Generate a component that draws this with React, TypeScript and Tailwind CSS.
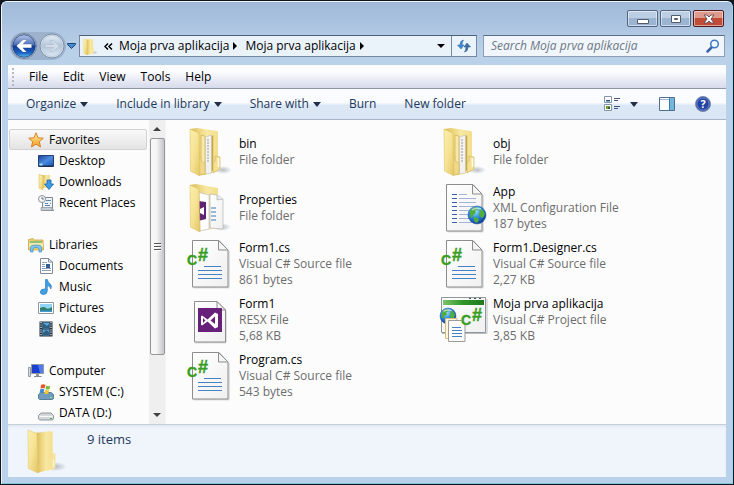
import type { ReactNode } from 'react';
import clsx from 'clsx';

type IconProps = { className?: string };

interface FileEntry {
  name: string;
  kind: string;
  size?: string;
  icon: ReactNode;
}

interface TreeGroup {
  label: string;
  icon: ReactNode;
  selected?: boolean;
  items: { label: string; icon: ReactNode }[];
}

// Gradients shared by all the icons
const Gradients = () => (
  <svg width="0" height="0" className="absolute" aria-hidden="true">
    <defs>
      <linearGradient id="flap" x1="0" y1="0" x2="1" y2="1">
        <stop offset="0" stopColor="#fbf0b0" />
        <stop offset="0.5" stopColor="#f6e292" />
        <stop offset="1" stopColor="#e3c564" />
      </linearGradient>
      <linearGradient id="panel" x1="0" y1="0" x2="1" y2="0">
        <stop offset="0" stopColor="#d6b858" />
        <stop offset="0.3" stopColor="#ecd47c" />
        <stop offset="0.6" stopColor="#f8e8a2" />
        <stop offset="1" stopColor="#f3de8c" />
      </linearGradient>
      <linearGradient id="paper" x1="0" y1="0" x2="1" y2="1">
        <stop offset="0" stopColor="#ffffff" />
        <stop offset="1" stopColor="#f0f0f0" />
      </linearGradient>
      <radialGradient id="shade">
        <stop offset="0" stopColor="#9aa3ad" stopOpacity="0.7" />
        <stop offset="1" stopColor="#9aa3ad" stopOpacity="0" />
      </radialGradient>
      <linearGradient id="back" x1="0" y1="0" x2="0" y2="1">
        <stop offset="0" stopColor="#b9c9e6" />
        <stop offset="0.45" stopColor="#4a6cb4" />
        <stop offset="0.5" stopColor="#123a90" />
        <stop offset="0.8" stopColor="#1b5fc0" />
        <stop offset="1" stopColor="#58c4f2" />
      </linearGradient>
      <linearGradient id="forward" x1="0" y1="0" x2="0" y2="1">
        <stop offset="0" stopColor="#e4ecf4" />
        <stop offset="0.5" stopColor="#b3c5d9" />
        <stop offset="1" stopColor="#dbe8f4" />
      </linearGradient>
      <radialGradient id="globe" cx="0.4" cy="0.3" r="0.75">
        <stop offset="0" stopColor="#a8e4ff" />
        <stop offset="0.45" stopColor="#2f8fe0" />
        <stop offset="1" stopColor="#0b2f8c" />
      </radialGradient>
      <linearGradient id="screen" x1="0" y1="0" x2="1" y2="1">
        <stop offset="0" stopColor="#1b3f9a" />
        <stop offset="0.5" stopColor="#4c8ce0" />
        <stop offset="1" stopColor="#1c50b0" />
      </linearGradient>
      <linearGradient id="star" x1="0" y1="0" x2="0" y2="1">
        <stop offset="0" stopColor="#fff3a0" />
        <stop offset="1" stopColor="#f59a1c" />
      </linearGradient>
      <linearGradient id="banner" x1="0" y1="0" x2="1" y2="0">
        <stop offset="0" stopColor="#7cc46a" />
        <stop offset="0.5" stopColor="#2f9428" />
        <stop offset="1" stopColor="#1f7a20" />
      </linearGradient>
    </defs>
  </svg>
);

const FolderIcon = ({ className = 'h-12 w-12' }: IconProps) => (
  <svg viewBox="0 0 48 48" className={className} aria-hidden="true">
    <ellipse cx="31" cy="41" rx="12" ry="5" fill="url(#shade)" />
    <path d="M10 4 26 2.500l2 1.500v40l-13 3-4 1Z" fill="url(#panel)" />
    <path d="M25 31l3-1.500V26l3 1v15l-4 3-2-1Z" fill="#f6e49a" />
    <path d="M29 34v7" stroke="#fffbe6" />
    <path d="M1 1 11 5 12 48 1.500 43Z" fill="url(#flap)" stroke="#e0c468" strokeWidth="0.500" />
  </svg>
);

const FilledFolderIcon = () => (
  <svg viewBox="0 0 48 48" className="h-12 w-12" aria-hidden="true">
    <ellipse cx="35" cy="42" rx="9" ry="4" fill="url(#shade)" />
    <path d="M2 1 9 0l20 3 1 1v39l-13 4h-6Z" fill="url(#panel)" />
    <path d="M13 7l4 1v38l-4 1Z" fill="#f7e8a6" stroke="#c7a748" strokeWidth="0.600" />
    <path d="M17.500 9 23.500 7v38l-6 1Z" fill="#f1f1ef" stroke="#c4bfae" strokeWidth="0.600" />
    <path d="M20 11v24" stroke="#bcbcbc" strokeWidth="1.500" strokeDasharray="2 1" />
    <path d="M24.500 7.500v35" stroke="#c7a54a" strokeWidth="1.500" />
    <path d="M10 32l1-3h2v4l4 2v11l-6 1Z" fill="#efd888" stroke="#d0b050" strokeWidth="0.500" />
    <path d="M25 35l2-2v-5l5 1v12l-7 4Z" fill="#f4e092" stroke="#cfb050" strokeWidth="0.600" />
    <path d="M30.500 30v9" stroke="#fffdf0" strokeWidth="1.500" />
    <path d="M2 1 11 5 12 48 2.500 43Z" fill="url(#flap)" stroke="#d8b956" strokeWidth="0.500" />
  </svg>
);

const PropertiesFolderIcon = () => (
  <svg viewBox="0 0 48 48" className="h-12 w-12" aria-hidden="true">
    <ellipse cx="34" cy="43" rx="9" ry="4" fill="url(#shade)" />
    <path d="M2 1 8 0l22 4v40l-18 3Z" fill="url(#panel)" />
    <path d="M11 8.500l10 2.500v34l-9 2Z" fill="#ffffff" stroke="#b8b8b8" strokeWidth="0.600" />
    <path d="M10 17l8 1v17l-8 2Z" fill="#5d2274" />
    <path d="M12 25l4-2v8l-4-2Z" fill="#ffffff" />
    <path d="M22 10l7 1 6 4v30l-13-1Z" fill="url(#paper)" stroke="#b4b4b4" strokeWidth="0.700" />
    <path d="M29 11v5l6-1" fill="#e9e9e9" stroke="#a8a8a8" strokeWidth="0.600" />
    <path d="M23 24h5M23 28h5M23 32h5M23 36h5" stroke="#3c78b8" strokeWidth="1.200" />
    <path d="M2 1 11 5 12 48 2.500 43Z" fill="url(#flap)" stroke="#d8b956" strokeWidth="0.500" />
  </svg>
);

const Page = () => (
  <>
    <path d="M5.500 47.800H41V11" fill="none" stroke="#c6c6c6" />
    <path d="M4.500.5H31L40 10v37H4.500Z" fill="url(#paper)" stroke="#8d8d8d" />
    <path d="M30.500.5V10H40Z" fill="#f4f4f4" stroke="#8d8d8d" strokeLinejoin="round" />
  </>
);

const SharpMark = ({ x, y }: { x: number; y: number }) => (
  <g fill="#3a9d23" stroke="#3a9d23" strokeWidth="0.400" fontFamily="Liberation Sans, Arial, sans-serif" fontWeight="bold">
    <text x={x - 1} y={y} fontSize="14">C</text>
    <text x={x + 10} y={y - 4} fontSize="18">#</text>
  </g>
);

const CSharpFileIcon = () => (
  <svg viewBox="0 0 48 48" className="h-12 w-12 overflow-visible" aria-hidden="true">
    <Page />
    <path d="M16 26.500h17M10 30.500h24M10 34.500h24M10 38.500h24" stroke="#4682c4" />
    <SharpMark x={0} y={25} />
  </svg>
);

const Globe = ({ cx, cy, r }: { cx: number; cy: number; r: number }) => (
  <g transform={`translate(${cx} ${cy}) scale(${r / 9})`}>
    <circle r="9" fill="url(#globe)" stroke="#1c4c9c" strokeWidth="0.500" />
    <path d="M-7-4c2-3 5-4 7-4l1 2-3 2 1 2-3 2-1 3-2-1ZM2-6l4 1 2 4-2 4-3-1-1-3 1-2ZM-3 2l4 1 1 2-2 3-3-2Z" fill="#4fae3c" />
    <path d="M-5-5q4-3 9-1" fill="none" stroke="#ffffff" strokeOpacity="0.600" strokeWidth="1.500" />
  </g>
);

const ConfigFileIcon = () => (
  <svg viewBox="0 0 48 48" className="h-12 w-12 overflow-visible" aria-hidden="true">
    <Page />
    <path d="M10 10.500h5M10 14.500h5M10 18.500h5M10 22.500h5M10 26.500h5M10 30.500h5M10 34.500h5M10 38.500h5" stroke="#3e5ca8" />
    <path d="M17 10.500h8M17 14.500h17M17 18.500h17M17 22.500h17M17 26.500h12M17 30.500h10M17 34.500h11M17 38.500h14" stroke="#a3b2d8" />
    <Globe cx={35} cy={31} r={9} />
  </svg>
);

const ResxFileIcon = () => (
  <svg viewBox="0 0 48 48" className="h-12 w-12" aria-hidden="true">
    <path d="M7 46.800h31V15" fill="none" stroke="#c6c6c6" />
    <path d="M6.500 5.500H29L37.500 14v32h-31Z" fill="url(#paper)" stroke="#8d8d8d" />
    <path d="M29 5.500V14h8.500Z" fill="#f4f4f4" stroke="#8d8d8d" strokeLinejoin="round" />
    <path d="M10 12h24v24H10Z" fill="#68217a" />
    <path
      d="M14 19.500 19.500 23.500 27 16.500 30 18v13l-3 1.500-7.500-7L14 29.500l-1-.7v-8.500ZM15 22v5l2.500-2.500ZM27 20.500l-4.500 4L27 28Z"
      fill="#ffffff"
      fillRule="evenodd"
    />
  </svg>
);

const ProjectIcon = () => (
  <svg viewBox="0 0 48 48" className="h-12 w-12 overflow-visible" aria-hidden="true">
    <path d="M-.5 1.500h44v35h-44Z" fill="url(#paper)" stroke="#8f969c" />
    <path d="M0 37.500h45V3" fill="none" stroke="#b9bdc0" />
    <path d="M1 4h41v5H1Z" fill="url(#banner)" />
    <path d="M27 2.500h2M32 2.500h2M37 2.500h2" stroke="#3b5f38" />
    <Globe cx={6} cy={20} r={8} />
    <path d="M3.500 22.500H15v20H3.500Z" fill="#fff6dc" stroke="#d6bd84" />
    <path d="M6.500 24.500H19l4 4v17H6.500Z" fill="#fbfbfb" stroke="#9b9b9b" />
    <path d="M10 31.500h9M10 34.500h10M10 37.500h10M10 40.500h10" stroke="#4682c4" />
    <SharpMark x={20} y={29} />
  </svg>
);

const StarIcon = () => (
  <svg viewBox="0 0 16 16" className="h-4 w-4" aria-hidden="true">
    <path d="M8 .8 10 5.800l5.300.4-4 3.500 1.300 5.300L8 12.200 3.400 15l1.300-5.300-4-3.500L6 5.800Z" fill="url(#star)" stroke="#d9822b" />
  </svg>
);

const DesktopIcon = () => (
  <svg viewBox="0 0 16 16" className="h-4 w-4" aria-hidden="true">
    <path d="M.5 2.500h15v11H.5Z" fill="url(#screen)" stroke="#27406e" />
    <path d="M1 13h14" stroke="#16233d" />
    <path d="M1.500 11.500h3" stroke="#9fe0ff" strokeWidth="2" />
  </svg>
);

const DownloadsIcon = () => (
  <svg viewBox="0 0 16 16" className="h-4 w-4" aria-hidden="true">
    <path d="M4 1h8v13H4Z" fill="url(#panel)" />
    <path d="M1 0l4 2v14l-4-2Z" fill="url(#flap)" stroke="#d8b956" strokeWidth="0.500" />
    <path d="M9 6h4v4h2.500L11 15.500 6.500 10H9Z" fill="#3b9be6" stroke="#1c62b0" strokeWidth="0.800" />
  </svg>
);

const RecentIcon = () => (
  <svg viewBox="0 0 16 16" className="h-4 w-4" aria-hidden="true">
    <path d="M5.500 2.500h9v11l1 2h-11v-11Z" fill="#eef2f6" stroke="#7e8994" />
    <path d="M3 12.500h11v3H3Z" fill="#c4ccd4" stroke="#7e8994" strokeWidth="0.600" />
    <path d="M8 5.500h5M7 8.500h3M12 8.500h1M7 10.500h5" stroke="#5b87b5" />
    <circle cx="4" cy="4" r="3.500" fill="#f7f7f7" stroke="#8b939b" />
    <path d="M4 2v2h2" fill="none" stroke="#4b5560" strokeWidth="0.800" />
  </svg>
);

const LibrariesIcon = () => (
  <svg viewBox="0 0 16 16" className="h-4 w-4" aria-hidden="true">
    <path d="M.5 2.500 5 1.500l1 1.500h9l.5 10h-15Z" fill="#edcf72" stroke="#c9a545" strokeWidth="0.800" />
    <path d="M2 4h12v2H2Z" fill="#8fc17a" />
    <path d="M1 6h14v4H1Z" fill="#f9eaa8" />
    <path d="M2.500 15v-4.500q0-2.500 5.500-2.500t5.500 2.500V15H11v-3q0-1.500-3-1.500T5 12v3Z" fill="#7fc4ee" stroke="#3f8fc4" strokeWidth="0.700" />
  </svg>
);

const DocumentsIcon = () => (
  <svg viewBox="0 0 16 16" className="h-4 w-4" aria-hidden="true">
    <path d="M2.500.5h8L14.500 4v11.500h-12Z" fill="#ffffff" stroke="#7d8a99" />
    <path d="M10.500.5V4h4" fill="none" stroke="#7d8a99" />
    <path d="M4 4.500h5M4 6.500h3M4 8.500h3M4 10.500h9M4 12.500h9" stroke="#8ba0b8" />
    <path d="M8 6h4v4H8Z" fill="#2f5f94" />
  </svg>
);

const MusicIcon = () => (
  <svg viewBox="0 0 16 16" className="h-4 w-4" aria-hidden="true">
    <path
      d="M7.500.5h1.800q.5 3 3 4.500 2 2 .5 5-.2-3-3.500-3.500V12q-.3 3.500-4 3.500-3-.2-3-2.500.3-3 3.700-3 1 0 1.500.3Z"
      fill="#3fa0e6"
      stroke="#1e70ba"
      strokeWidth="0.600"
    />
  </svg>
);

const PicturesIcon = () => (
  <svg viewBox="0 0 16 16" className="h-4 w-4" aria-hidden="true">
    <path d="M.5 2.500h15v11H.5Z" fill="#ffffff" stroke="#8b98a6" />
    <path d="M2 4h12v8H2Z" fill="#8fd3f5" />
    <path d="M2 8q4-2 6 0t6-1v5H2Z" fill="#2f7d6c" />
    <path d="M2 10.500h12V12H2Z" fill="#3f9bd0" />
  </svg>
);

const VideosIcon = () => (
  <svg viewBox="0 0 16 16" className="h-4 w-4" aria-hidden="true">
    <path d="M1.500.5h13v15h-13Z" fill="#24303c" />
    <path d="M4.500 1.500h7v6h-7ZM4.500 8.500h7v6h-7Z" fill="#5aa5dc" />
    <path d="M5 2l4 3 2-2v4H5ZM5 12l3-3 3 2v3H5Z" fill="#2f5f7e" />
    <path d="M3 1v14M13 1v14" stroke="#e9eef3" strokeWidth="1.200" strokeDasharray="1.200 1.200" />
  </svg>
);

const ComputerIcon = () => (
  <svg viewBox="0 0 16 16" className="h-4 w-4" aria-hidden="true">
    <path d="M.5 4.500h2v9h-2Z" fill="#d5dbe0" stroke="#7f8b95" strokeWidth="0.800" />
    <path d="M3.500 1.500h12v9h-12Z" fill="#1c3fd0" stroke="#8f9aa5" />
    <path d="M10 2h5v8h-3Z" fill="#4e7cf0" />
    <path d="M8 11h3v2H8Z" fill="#8f9aa5" />
    <path d="M6 13.500h7.500" stroke="#7f8b95" />
  </svg>
);

const SystemDriveIcon = () => (
  <svg viewBox="0 0 16 16" className="h-4 w-4" aria-hidden="true">
    <path d="M.5 10.500 3 8.500h10l2.500 2v4l-1 1h-13l-1-1Z" fill="#6f9cbc" stroke="#456b88" strokeWidth="0.800" />
    <path d="M12 13.500h2" stroke="#8af08a" />
    <path d="M3 1q2-1.500 4.500 0L6.500 4.500q-2-1-4 0Z" fill="#e8562a" />
    <path d="M8.300 1.500q2 1.200 4 .2L11.500 5q-2 1-4 0Z" fill="#7cba3c" />
    <path d="M2.300 5.300q2-1 4 0L5.500 9q-2-1-4 0Z" fill="#3d8ad6" />
    <path d="M7.200 5.800q2 1 4 .2l-1 3.500q-2 .8-4 0Z" fill="#f8c52c" />
  </svg>
);

const DataDriveIcon = () => (
  <svg viewBox="0 0 16 16" className="h-4 w-4" aria-hidden="true">
    <path d="M.5 10.500 3 8h10l2.500 2.500v3l-1 1.500h-13l-1-1.500Z" fill="#d4d8db" stroke="#7c8388" strokeWidth="0.800" />
    <path d="M1.500 11.500h13" stroke="#f8fafa" />
    <path d="M12 13.500h2" stroke="#3bb54a" />
  </svg>
);

const DownArrow = ({ className = 'h-[5px] fill-[#1f2f49]' }: IconProps) => (
  <svg viewBox="0 0 8 5" preserveAspectRatio="none" className={clsx('w-2', className)} aria-hidden="true">
    <path d="M0 0h8L4 5Z" />
  </svg>
);

const RightArrow = () => (
  <svg viewBox="0 0 4 8" className="h-2 w-1 shrink-0" aria-hidden="true">
    <path d="M0 0v8l4-4Z" />
  </svg>
);

const menus = ['File', 'Edit', 'View', 'Tools', 'Help'];

const tree: TreeGroup[] = [
  {
    label: 'Favorites',
    icon: <StarIcon />,
    selected: true,
    items: [
      { label: 'Desktop', icon: <DesktopIcon /> },
      { label: 'Downloads', icon: <DownloadsIcon /> },
      { label: 'Recent Places', icon: <RecentIcon /> },
    ],
  },
  {
    label: 'Libraries',
    icon: <LibrariesIcon />,
    items: [
      { label: 'Documents', icon: <DocumentsIcon /> },
      { label: 'Music', icon: <MusicIcon /> },
      { label: 'Pictures', icon: <PicturesIcon /> },
      { label: 'Videos', icon: <VideosIcon /> },
    ],
  },
  {
    label: 'Computer',
    icon: <ComputerIcon />,
    items: [
      { label: 'SYSTEM (C:)', icon: <SystemDriveIcon /> },
      { label: 'DATA (D:)', icon: <DataDriveIcon /> },
    ],
  },
];

const files: FileEntry[] = [
  { name: 'bin', kind: 'File folder', icon: <FilledFolderIcon /> },
  { name: 'obj', kind: 'File folder', icon: <FilledFolderIcon /> },
  { name: 'Properties', kind: 'File folder', icon: <PropertiesFolderIcon /> },
  { name: 'App', kind: 'XML Configuration File', size: '187 bytes', icon: <ConfigFileIcon /> },
  { name: 'Form1.cs', kind: 'Visual C# Source file', size: '861 bytes', icon: <CSharpFileIcon /> },
  { name: 'Form1.Designer.cs', kind: 'Visual C# Source file', size: '2,27 KB', icon: <CSharpFileIcon /> },
  { name: 'Form1', kind: 'RESX File', size: '5,68 KB', icon: <ResxFileIcon /> },
  { name: 'Moja prva aplikacija', kind: 'Visual C# Project file', size: '3,85 KB', icon: <ProjectIcon /> },
  { name: 'Program.cs', kind: 'Visual C# Source file', size: '543 bytes', icon: <CSharpFileIcon /> },
];

const captionButton =
  'flex h-[17px] w-[31px] items-center justify-center rounded-[2px] border shadow-[inset_0_0_0_1px_rgba(255,255,255,0.5)]';

const TitleBar = () => (
  <div className="flex justify-end gap-[2px] pr-[2px]">
    <button aria-label="Minimize" className={clsx(captionButton, 'border-[#54667f] bg-linear-to-b from-[#bccee4] from-50% to-[#9bb4d2] to-50%')}>
      <svg viewBox="0 0 12 6" className="mt-1 h-[6px] w-3" aria-hidden="true">
        <path d="M.5 1.500h11v4H.5Z" fill="#ffffff" stroke="#535a68" />
      </svg>
    </button>
    <button aria-label="Maximize" className={clsx(captionButton, 'border-[#54667f] bg-linear-to-b from-[#bccee4] from-50% to-[#9bb4d2] to-50%')}>
      <svg viewBox="0 0 12 10" className="h-[10px] w-3" aria-hidden="true">
        <path d="M1.500 1.500h9v7h-9Z" fill="#ffffff" stroke="#535a68" />
        <path d="M4.500 4.500h3v1h-3Z" fill="#8fa6c2" stroke="#535a68" />
      </svg>
    </button>
    <button aria-label="Close" className={clsx(captionButton, 'border-[#4f1a1c] bg-linear-to-b from-[#dd9a8d] from-50% to-[#c04c38] to-50%')}>
      <svg viewBox="0 0 12 10" className="h-[10px] w-3" aria-hidden="true">
        <path d="M1 1h3l2 2 2-2h3L8 5l3 4H8L6 7 4 9H1l3-4Z" fill="#ffffff" stroke="#5a4a58" strokeWidth="0.900" />
      </svg>
    </button>
  </div>
);

const NavButtons = () => (
  <div className="flex w-[69px] items-center">
    <div className="-my-1 flex items-center rounded-full bg-[#9db3cd]">
      <button aria-label="Back">
        <svg viewBox="0 0 28 28" className="h-7 w-7" aria-hidden="true">
          <circle cx="14" cy="14" r="12.500" fill="#dfe9f4" stroke="#6b7f9b" />
          <circle cx="14" cy="14" r="11.300" fill="url(#back)" stroke="#1d3b7a" strokeWidth="0.800" />
          <path d="M6.500 14 13 8h3.500l-4 4.300h9v3.400h-9l4 4.300H13Z" fill="#ffffff" />
        </svg>
      </button>
      <button aria-label="Forward">
        <svg viewBox="0 0 28 28" className="h-7 w-7" aria-hidden="true">
          <circle cx="14" cy="14" r="12" fill="#d9e4ef" stroke="#7c8fa8" />
          <circle cx="14" cy="14" r="10.500" fill="url(#forward)" stroke="#b5c4d5" strokeWidth="0.800" />
          <path d="M21.500 14 15 8.500h-3l3.800 4H7v3h8.800l-3.800 4h3Z" fill="#d3dee9" stroke="#a5b7cb" strokeWidth="0.500" />
        </svg>
      </button>
    </div>
    <button aria-label="Recent pages" className="ml-px">
      <svg viewBox="0 0 9 6" className="h-[6px] w-[9px]" aria-hidden="true">
        <path d="M.5.5h8v1l-4 4-4-4Z" fill="#3f8fd0" stroke="#1f4376" />
      </svg>
    </button>
  </div>
);

const AddressBar = () => (
  <div className="flex h-[22px] min-w-0 flex-1 border border-[#75889f] border-t-[#4e6078] bg-[#eaf2fa]">
    <div className="flex min-w-0 flex-1 items-center pl-[3px]">
      <FolderIcon className="h-[17px] w-[17px] shrink-0" />
      <svg viewBox="0 0 9 7" className="mr-[6px] ml-1 h-[7px] w-[9px] shrink-0" fill="none" stroke="#000000" strokeWidth="1.500" aria-hidden="true">
        <path d="M4 .5l-3 3 3 3M8 .5l-3 3 3 3" />
      </svg>
      <button className="mr-1 whitespace-nowrap">Moja prva aplikacija</button>
      <RightArrow />
      <button className="mr-1 ml-2 whitespace-nowrap">Moja prva aplikacija</button>
      <RightArrow />
      <button aria-label="Previous locations" className="mr-[6px] ml-auto">
        <DownArrow className="h-1 fill-black" />
      </button>
    </div>
    <button aria-label="Refresh" className="flex w-[25px] items-center justify-center border-l border-[#75889f]">
      <svg viewBox="0 0 14 14" className="h-[14px] w-[14px]" aria-hidden="true">
        <path d="M6.500 1Q3 1.500 3 6H.5L4 10l3-4H5q0-3 1.500-5Z" fill="#3f8ad0" stroke="#2a62a4" strokeWidth="0.500" />
        <path d="M7.500 13Q11 12.500 11 8h2.500L10 4 7 8h2q0 3-1.500 5Z" fill="#3f74a8" stroke="#28507c" strokeWidth="0.500" />
      </svg>
    </button>
  </div>
);

const SearchBox = () => (
  <form className="mr-px flex h-[22px] w-[242px] items-center border border-[#8d9db2] border-t-[#5d6f87] bg-[#f1f6fc] pr-1 pl-[7px]" onSubmit={(e) => e.preventDefault()}>
    <input
      type="search"
      aria-label="Search Moja prva aplikacija"
      placeholder="Search Moja prva aplikacija"
      className="min-w-0 flex-1 bg-transparent italic outline-none placeholder:text-[#6d7785]"
    />
    <button aria-label="Search">
      <svg viewBox="0 0 14 14" className="h-[14px] w-[14px]" fill="none" aria-hidden="true">
        <path d="M1.500 12.500 6 8" stroke="#3b64a6" strokeWidth="2.500" strokeLinecap="round" />
        <circle cx="8.500" cy="5" r="3.800" fill="#eef6ff" stroke="#3f76c0" strokeWidth="1.500" />
      </svg>
    </button>
  </form>
);

const MenuBar = () => (
  <nav className="flex h-6 items-center gap-[15px] border-b border-[#8f96a5] bg-linear-to-b from-[#fbfcfe] from-30% to-[#d6daeb] pl-1">
    <span className="-mr-px h-[18px] w-[3px] border-l-2 border-dotted border-[#b3b8c8]" />
    {menus.map((menu) => (
      <button key={menu}>{menu}</button>
    ))}
  </nav>
);

const Toolbar = () => (
  <div className="flex h-[31px] items-center border-b border-[#a7b5c9] bg-linear-to-b from-[#fafcff] from-45% to-[#dce7f5] to-55% pr-[15px] pl-[18px] text-[#1e395b]">
    <div className="flex items-center gap-7">
      <button className="flex items-center gap-1">Organize <DownArrow /></button>
      <button className="flex items-center gap-1">Include in library <DownArrow /></button>
      <button className="flex items-center gap-1">Share with <DownArrow /></button>
      <button>Burn</button>
      <button>New folder</button>
    </div>
    <div className="ml-auto flex items-center">
      <button aria-label="Change your view">
        <svg viewBox="0 0 16 16" className="h-4 w-4" aria-hidden="true">
          <path d="M.5.5h7v6h-7ZM.5 8.500h7v6h-7Z" fill="#ffffff" stroke="#8296ab" />
          <path d="M2 4h4v1.500H2Z" fill="#1f4f86" />
          <path d="M2 10h4v3H2Z" fill="#7e9b2e" />
          <path d="M4 11h2v2H4Z" fill="#2f5f3a" />
          <path d="M10 2.500h6M10 4.500h4M10 10.500h6M10 12.500h4" stroke="#44597a" />
        </svg>
      </button>
      <button aria-label="More view options" className="ml-[10px]"><DownArrow /></button>
      <button aria-label="Show the preview pane" className="ml-[21px]">
        <svg viewBox="0 0 16 14" className="h-[14px] w-4" aria-hidden="true">
          <path d="M.5.5h15v13H.5Z" fill="#ffffff" stroke="#4f6f92" />
          <path d="M1 2.500h9" stroke="#9fb6cd" />
          <path d="M10 1h5v12h-5Z" fill="#74b6dd" />
          <path d="M10.500 1v12" stroke="#3f7ba8" />
        </svg>
      </button>
      <button aria-label="Get help" className="ml-5">
        <svg viewBox="0 0 16 16" className="h-4 w-4" aria-hidden="true">
          <circle cx="8" cy="8" r="7.500" fill="#2c4fae" stroke="#7d8ba8" />
          <circle cx="8" cy="8" r="6" fill="#2343a2" stroke="#93a8dc" strokeWidth="0.600" />
          <text x="8" y="12" fontSize="11" fontWeight="bold" fill="#ffffff" textAnchor="middle">?</text>
        </svg>
      </button>
    </div>
  </div>
);

const Sidebar = () => (
  <nav className="flex w-[141px] flex-col gap-[21px] overflow-hidden px-px pt-[9px]">
    {tree.map((group) => (
      <ul key={group.label}>
        <li>
          <a
            href="#"
            className={clsx(
              'flex h-[21px] items-center gap-[5px] rounded-[2px] border pl-[18px]',
              group.selected ? 'mr-px border-[#d2d2d2] bg-linear-to-b from-[#f9f9f9] to-[#e4e4e4]' : 'border-transparent',
            )}
          >
            {group.icon}
            {group.label}
          </a>
        </li>
        {group.items.map((item) => (
          <li key={item.label}>
            <a href="#" className="flex h-[21px] items-center gap-[5px] pl-[29px] whitespace-nowrap">
              {item.icon}
              {item.label}
            </a>
          </li>
        ))}
      </ul>
    ))}
  </nav>
);

const ScrollBar = () => (
  <div className="flex w-[17px] flex-col items-center border-r border-[#f4f4f4] bg-[#efefef]">
    <button aria-label="Scroll up" className="flex h-[18px] w-full items-center justify-center">
      <svg viewBox="0 0 8 4" className="h-1 w-2 fill-[#404040]" aria-hidden="true">
        <path d="M0 4h8L4 0Z" />
      </svg>
    </button>
    <div className="flex w-[15px] flex-[217] flex-col items-center justify-center gap-px rounded-[2px] border border-[#979797] bg-linear-to-r from-[#f6f6f6] from-40% to-[#c4c4ca]">
      <span className="h-[2px] w-[7px] border-t border-[#555555] bg-white" />
      <span className="h-[2px] w-[7px] border-t border-[#555555] bg-white" />
      <span className="h-[2px] w-[7px] border-t border-[#555555] bg-white" />
    </div>
    <div className="flex-[51]" />
    <button aria-label="Scroll down" className="flex h-[18px] w-full items-center justify-center">
      <DownArrow className="h-1 fill-[#404040]" />
    </button>
  </div>
);

const FileGrid = () => (
  <main className="grid flex-1 auto-rows-[56px] grid-cols-[repeat(auto-fill,254px)] overflow-hidden pt-1 pl-[22px]">
    {files.map((file) => (
      <button key={file.name} className="flex items-center gap-[3px] text-left">
        {file.icon}
        <span className="flex flex-col leading-4 text-[#6d6d6d]">
          <span className="text-black">{file.name}</span>
          <span>{file.kind}</span>
          {file.size && <span>{file.size}</span>}
        </span>
      </button>
    ))}
  </main>
);

const App = () => (
  <div className="h-screen bg-[#10161f] p-px font-['Open_Sans','Noto_Sans',sans-serif] text-[12px] leading-4 text-black">
    <Gradients />
    <div className="flex h-full flex-col rounded-t-[6px] border border-[#f1f6fb] border-r-[#8fdcf2] border-b-[#7cc6d6] bg-[#b9d1ea] px-[6px] pb-[6px]">
      <header className="-mx-[6px] flex flex-col gap-2 rounded-t-[5px] bg-linear-to-b from-[#9fb9d7] to-[#bad1ea] to-80% px-[6px] py-2">
        <TitleBar />
        <div className="flex items-center">
          <div className="pl-[2px]"><NavButtons /></div>
          <AddressBar />
          <div className="ml-[6px]"><SearchBox /></div>
        </div>
      </header>
      <MenuBar />
      <Toolbar />
      <div className="flex min-h-0 flex-1 bg-[#fcfcfc]">
        <Sidebar />
        <ScrollBar />
        <FileGrid />
      </div>
      <footer className="flex h-[53px] border-t border-[#c3cfdc] bg-[#f0f4fb] pt-1 pl-[19px] shadow-[inset_0_2px_2px_#e3e9f2]">
        <FolderIcon className="h-[44px] w-[44px]" />
        <p className="pt-[2px] pl-4 text-[13px] text-[#1e395b]">9 items</p>
      </footer>
    </div>
  </div>
);

export default App;
